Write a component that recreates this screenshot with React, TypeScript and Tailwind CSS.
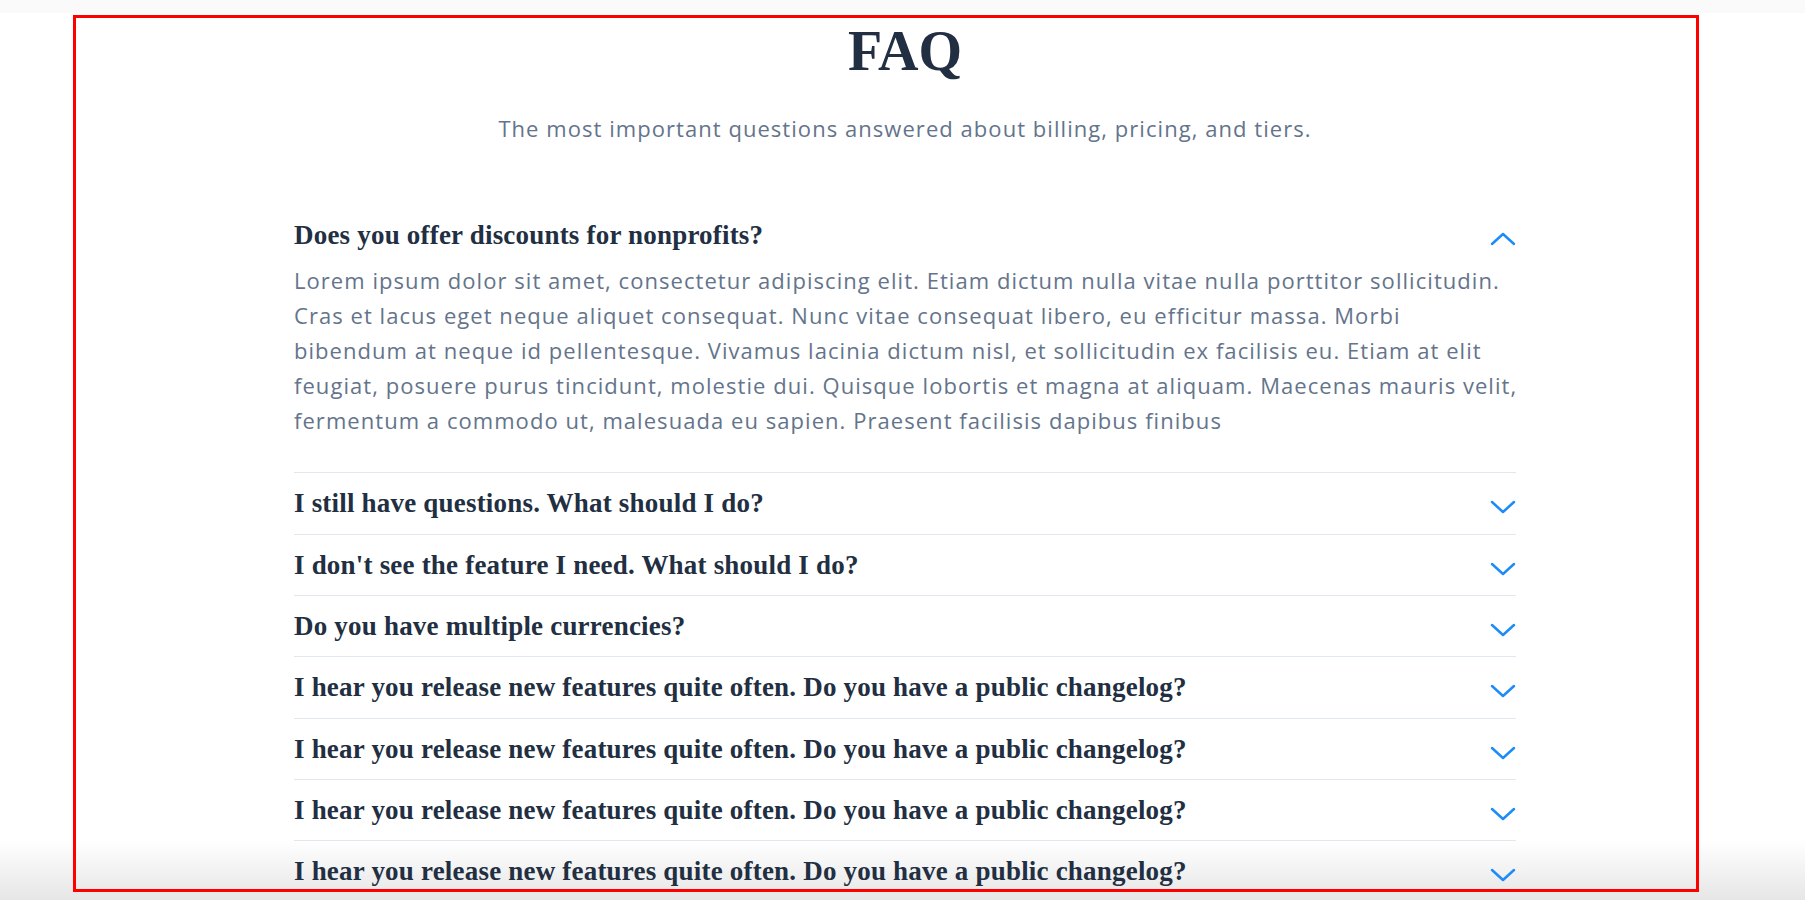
import { useState } from 'react';

const questions = [
    'Does you offer discounts for nonprofits?',
    'I still have questions. What should I do?',
    "I don't see the feature I need. What should I do?",
    'Do you have multiple currencies?',
    'I hear you release new features quite often. Do you have a public changelog?',
    'I hear you release new features quite often. Do you have a public changelog?',
    'I hear you release new features quite often. Do you have a public changelog?',
    'I hear you release new features quite often. Do you have a public changelog?',
];

// line breaks kept as in the design
const answerLines = [
    'Lorem ipsum dolor sit amet, consectetur adipiscing elit. Etiam dictum nulla vitae nulla porttitor sollicitudin.',
    'Cras et lacus eget neque aliquet consequat. Nunc vitae consequat libero, eu efficitur massa. Morbi',
    'bibendum at neque id pellentesque. Vivamus lacinia dictum nisl, et sollicitudin ex facilisis eu. Etiam at elit',
    'feugiat, posuere purus tincidunt, molestie dui. Quisque lobortis et magna at aliquam. Maecenas mauris velit,',
    'fermentum a commodo ut, malesuada eu sapien. Praesent facilisis dapibus finibus',
];

const Chevron = ( { up }: { up: boolean } ) => (
    <svg
        width="26"
        height="14"
        viewBox="0 0 26 14"
        fill="none"
        stroke="#1d8cf8"
        strokeWidth="2.5"
        strokeLinecap="round"
        strokeLinejoin="round"
        className="mt-2 shrink-0"
    >
        { up ? <polyline points="2,12 13,2 24,12" /> : <polyline points="2,2 13,12 24,2" /> }
    </svg>
);

const App = () =>
{
    const [ open, setOpen ] = useState<number | null>( 0 );

    return (
        <div className="relative h-[900px] overflow-hidden bg-white">
            {/* fade at the bottom edge, behind the content */ }
            <div className="pointer-events-none absolute bottom-0 left-0 right-0 h-[60px] bg-linear-to-b from-white to-[#e6e6e6]" />

            <div className="relative h-[13px] bg-[#fafafa]" />

            <div className="relative mx-auto w-[1227px] pl-[5px] pt-[10px]">
                <h2 className="text-center font-['Liberation_Serif',serif] text-[56px] font-bold leading-[56px] text-[#222f42]">
                    FAQ
                </h2>
                <p className="mt-[35px] text-center font-['Open_Sans',sans-serif] text-[22px] leading-[28px] tracking-[1.05px] text-[#64748b]">
                    The most important questions answered about billing, pricing, and tiers.
                </p>

                <div className="mt-[63px]">
                    { questions.map( ( q, i ) => (
                        <div key={ i } className={ i > 0 ? 'border-t border-[#e2e8f0]' : '' }>
                            <button
                                type="button"
                                onClick={ () => setOpen( open === i ? null : i ) }
                                className="flex w-full items-center justify-between py-4 text-left"
                            >
                                <span className="font-['Liberation_Serif',serif] text-[27px] font-bold leading-[28.33px] tracking-[0.2px] text-[#222f42]">
                                    { q }
                                </span>
                                <Chevron up={ open === i } />
                            </button>
                            { open === i && (
                                <p className="-mr-[12px] -mt-[2px] whitespace-nowrap pb-[34px] font-['Open_Sans',sans-serif] text-[22px] leading-[35px] tracking-[1.05px] text-[#64748b]">
                                    { answerLines.map( ( line, j ) => (
                                        <span key={ j } className="block">
                                            { line }
                                        </span>
                                    ) ) }
                                </p>
                            ) }
                        </div>
                    ) ) }
                </div>
            </div>

            {/* red outline drawn over the page */ }
            <div className="pointer-events-none absolute left-[73px] top-[15px] h-[877px] w-[1626px] border-[3px] border-[#ff0000]" />
        </div>
    );
};

export default App;
